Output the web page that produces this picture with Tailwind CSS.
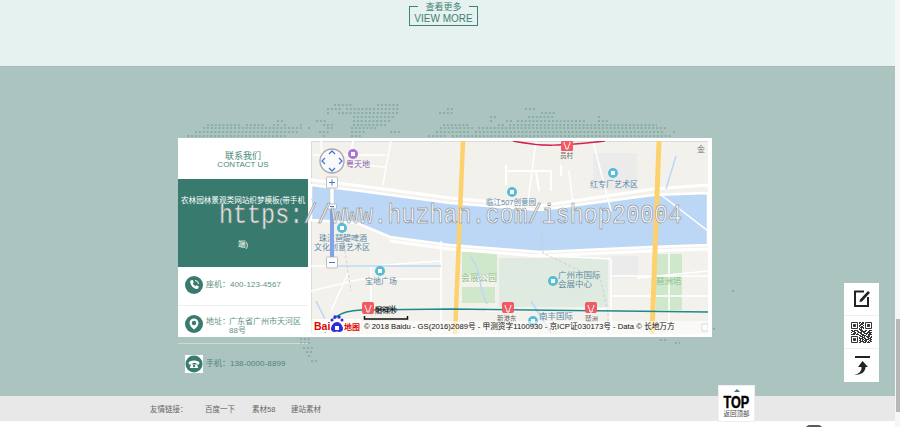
<!doctype html>
<html>

<head>
    <meta charset="UTF-8">
    <meta name="viewport" content="width=device-width, initial-scale=1.0">
    <title>联系我们</title>
    <script src="https://cdn.jsdelivr.net/npm/@tailwindcss/browser@4"></script>
</head>

<body class="bg-white overflow-hidden font-['Liberation_Sans','Noto_Sans_CJK_SC',sans-serif]">
    <div class="relative flex w-[900px] h-[427px] overflow-hidden">
        <div class="w-[895px] flex flex-col">
            <!-- more button -->
            <section class="h-[66px] bg-[#e6f2ef] pt-[6px] pl-[409px]">
                <a class="relative w-[69px] h-[20px] border border-t-0 border-[#3f8174] flex flex-col items-center text-[#3f8174]">
                    <span class="absolute top-0 left-0 w-[8px] border-t border-[#3f8174]"></span>
                    <span class="absolute top-0 right-0 w-[8px] border-t border-[#3f8174]"></span>
                    <span class="text-[9px] leading-[10px] mt-[-4px]">查看更多</span>
                    <span class="text-[10px] leading-[11px] mt-[1px] whitespace-nowrap">VIEW MORE</span>
                </a>
            </section>

            <!-- contact -->
            <section class="relative h-[330px] bg-[#abc4bf] border-t border-[#a2bcb7] pt-[71px] pl-[178px]">
                <svg class="absolute left-0 top-0" width="895" height="330" viewBox="0 66 895 330" fill="none" stroke="#8aaea7" stroke-width="2" stroke-dasharray="2 1.87">
                    <path d="M334 104H353M377 104H400M327 108H342M346 108H400M447 108H454M525 108H536M327 112H330M338 112H400M439 112H454M541 112H555" />
                    <path d="M353 116H396M490 116H497M528 116H555M598 116H602M277 120H283M316 120H326M353 120H392M490 120H493M506 120H512M517 120H586M598 120H609" />
                    <path d="M207 124H241M246 124H264M273 124H280M284 124H287M300 124H303M323 124H334M353 124H388M443 124H470M498 124H505M509 124H657" />
                    <path d="M203 127H303M308 127H310M327 127H334M351 127H377M440 127H473M478 127H667" />
                    <path d="M195 131H298M319 131H330M351 131H365M390 131H400M436 131H470M475 131H663M673 131H675" />
                    <path d="M187 135H287M323 135H326M351 135H362M428 135H447M452 135H473M475 135H672" />
                    <path d="M300 338H310M300 342H310M303 347H314M306 351H314M308 355H312M311 360H318M732 290H734M713 328H715M660 339H668M675 342H680" />
                </svg>

                <div class="relative flex w-[534px] h-[199px] bg-white">
                    <!-- left column -->
                    <div class="w-[130px] shrink-0">
                        <div class="h-[41px] pt-[14px] text-center text-[#4a8a7c]">
                            <p class="text-[9px] leading-[9px]">联系我们</p>
                            <p class="text-[8px] leading-[7px]">CONTACT US</p>
                        </div>
                        <div class="h-[88px] bg-[#387b6e] text-white text-center text-[7.6px] leading-[44px] overflow-hidden">
                            <p class="px-[1px]">农林园林景观类网站织梦模板(带手机端)</p>
                        </div>
                        <div class="h-[39px] flex items-center pl-[7px] pb-[2px] border-b border-[#eeeeee] text-[8px] text-[#5d9186]">
                            <svg class="w-[18px] h-[18px] shrink-0" viewBox="0 0 18 18">
                                <circle cx="9" cy="9" r="9" fill="#387b6e" />
                                <path d="M6.200 4.200 7.800 4l1 2.600-1 1c.5 1.200 1.300 2 2.500 2.600l1-1 2.400 1.100-.3 1.700c-.3.8-1 1-1.800.9C8.300 12.300 5.800 9.700 5.200 6.200c-.1-1 .2-1.700 1-2Z" fill="#fff" />
                                <path d="M10 4.500a3.500 3.500 0 0 1 3.500 3.500" stroke="#fff" fill="none" />
                            </svg>
                            <span class="ml-[3px] whitespace-nowrap">座机：</span><span class="whitespace-nowrap tracking-[.1px]">400-123-4567</span>
                        </div>
                        <div class="h-[38px] flex items-center pl-[7px] border-b border-white/40 text-[8px] leading-[9px] text-[#5d9186]">
                            <svg class="w-[18px] h-[18px] shrink-0 mt-[-1px]" viewBox="0 0 18 18">
                                <circle cx="9" cy="9" r="9" fill="#387b6e" />
                                <path d="M9 3.500a4.500 4.500 0 0 1 4.500 4.500c0 2.500-2.500 5-4.500 6.500-2-1.500-4.500-4-4.500-6.500A4.500 4.500 0 0 1 9 3.500Z" fill="#fff" />
                                <circle cx="9" cy="8" r="2.200" fill="#387b6e" />
                            </svg>
                            <span class="ml-[3px] w-[23px] shrink-0 self-start mt-[11px] whitespace-nowrap">地址：</span>
                            <span class="w-[72px] self-start mt-[11px]">广东省广州市天河区88号</span>
                        </div>
                        <div class="h-[38px] flex items-center pl-[7px] pt-[2px] text-[8px] text-[#4f857a]">
                            <svg class="w-[18px] h-[18px] shrink-0" viewBox="0 0 18 18">
                                <rect width="18" height="18" fill="#fff" />
                                <circle cx="9" cy="9" r="8.500" fill="#387b6e" />
                                <path d="M3.500 7.500C5 4.800 13 4.800 14.500 7.500l-.5 2h-2.500l-.3-1.500h-3.400l-.3 1.500H4Z" fill="#fff" />
                                <path d="M6 9.500h6l1.200 3.500H4.800Z" fill="#fff" />
                                <circle cx="9" cy="11" r="1.200" fill="#387b6e" />
                            </svg>
                            <span class="ml-[3px] whitespace-nowrap">手机：</span><span class="whitespace-nowrap tracking-[.1px]">138-0000-8899</span>
                        </div>
                    </div>

                    <!-- map -->
                    <svg class="ml-[3px] mt-[3px] shrink-0" width="397" height="193" viewBox="0 0 397 193" font-size="8.500">
                        <rect width="397" height="193" fill="#f3f1ec" />
                        <rect x="282" y="12" width="44" height="37" fill="#ebebeb" />
                        <rect x="0" y="0" width="1" height="193" fill="#d9dedc" />
                        <rect x="0" y="0" width="397" height="1" fill="#d9dedc" />
                        <!-- parks -->
                        <rect x="151" y="111" width="35" height="23" fill="#cfe8cb" />
                        <rect x="151" y="146" width="33" height="16" fill="#cfe8cb" />
                        <rect x="188" y="117" width="109" height="49" fill="#dfebe0" />
                        <path d="M345 113H371V169H345Z" fill="#cfe8cb" />
                        <rect x="300" y="115" width="27" height="22" fill="#ebebeb" />
                        <!-- river -->
                        <path d="M0 44 50 50 139 62 229 69 289 61 342 54 397 52V104L339 106 229 111 139 104 79 96 46 82 0 79Z" fill="#bbd7f5" stroke="#fff" stroke-width="2.500" />
                        <path d="M0 39 50 45 139 57 229 65 289 56 342 48 397 44M79 100 139 108 229 115 339 110 397 108" fill="none" stroke="#fff" stroke-width="3" />
                        <!-- small roads and water -->
                        <path d="M10 0 12 28M42 0 38 20M12 22 75 26 80 0M75 26 72 44M2 14H75M225 0 217 60M258 30 262 62M300 70 282 0M0 125H60L100 122 130 120M0 150 50 138H130M60 125V170M130 100V192M190 112 300 118M300 118V192M175 170 297 168M300 155 397 155M300 135 397 135M326 137 397 130M358 112V192M397 90 345 50M38 130 20 170" fill="none" stroke="#fff" stroke-width="1.500" />
                        <path d="M195 24V44M195 30H240V50M225 30 228 50M250 24V35" fill="none" stroke="#fff" stroke-width="2" />
                        <path d="M365 15 355 48M5 160 18 186M160 116C170 130 168 140 171 150M170 148 176 163M220 160 240 192M20 125H130" fill="none" stroke="#bbd7f5" stroke-width="1.500" />
                        <path d="M0 58 30 85 40 150M229 70 232 112 290 140 297 172V192" fill="none" stroke="#c9c9c9" stroke-width=".8" stroke-dasharray="3 2" />
                        <!-- highways -->
                        <path d="M152 0 144 193" stroke="#fdd26e" stroke-width="4.500" fill="none" />
                        <path d="M348 0 341 193" stroke="#fdd26e" stroke-width="5" fill="none" />
                        <!-- metro lines -->
                        <path d="M202 0C230 6 250 5 294 0" stroke="#d3224f" stroke-width="1.500" fill="none" />
                        <path d="M14 192C20 178 26 170 50 169L140 168 397 171" stroke="#1d8a8a" stroke-width="1.500" fill="none" />
                        <g fill="#ef5a64">
                            <rect x="51" y="161" width="12" height="12" rx="2" />
                            <rect x="191" y="161" width="12" height="11" rx="2" />
                            <rect x="274" y="161" width="12" height="11" rx="2" />
                            <rect x="250" y="0" width="12" height="10" rx="1" />
                        </g>
                        <path d="M54 164c0 3 2 3 2 7h2c0-4 2-4 2-7M194 164c0 3 2 3 2 7h2c0-4 2-4 2-7M277 164c0 3 2 3 2 7h2c0-4 2-4 2-7M253 1c0 3 2 3 2 7h2c0-4 2-4 2-7" fill="none" stroke="#fff" />
                        <!-- pois -->
                        <circle cx="42" cy="13" r="5" fill="#a974d6" />
                        <rect x="40" y="11" width="4" height="4" fill="#fff" />
                        <g fill="#56bcd8">
                            <circle cx="31" cy="87" r="5" />
                            <circle cx="69" cy="130" r="5" />
                            <circle cx="201" cy="51" r="5" />
                            <circle cx="302" cy="32" r="5" />
                            <circle cx="242" cy="140" r="5" />
                            <circle cx="222" cy="180" r="5" />
                        </g>
                        <g fill="#fff">
                            <rect x="29" y="85" width="4" height="4" />
                            <rect x="67" y="128" width="4" height="4" />
                            <rect x="199" y="49" width="4" height="4" />
                            <rect x="300" y="30" width="4" height="4" />
                            <rect x="240" y="138" width="4" height="4" />
                            <rect x="220" y="178" width="4" height="4" />
                        </g>
                        <!-- labels -->
                        <g fill="#5e8ba3">
                            <text x="35" y="26" fill="#8b63b0" font-size="8">粤天地</text>
                            <text x="8" y="100" font-size="8">珠江琶醍啤酒</text>
                            <text x="3" y="109" font-size="8">文化创意艺术区</text>
                            <text x="54" y="143" font-size="8">宝地广场</text>
                            <text x="175" y="64" font-size="7.500">临江507创意园</text>
                            <text x="279" y="46" font-size="8">红专厂艺术区</text>
                            <text x="247" y="137" font-size="8.500">广州市国际</text>
                            <text x="247" y="146" font-size="8.500">会展中心</text>
                            <text x="228" y="178" font-size="8.500">南丰国际</text>
                            <text x="150" y="140" font-size="9" fill="#92c492">会展公园</text>
                            <text x="345" y="143" font-size="8.500" fill="#92c492">琶洲塔</text>
                            <text x="249" y="17" font-size="6.500" fill="#666">员村</text>
                            <text x="186" y="180" font-size="6.500" fill="#666">新港东</text>
                            <text x="274" y="180" font-size="6.500" fill="#666">琶洲</text>
                            <text x="386" y="11" font-size="8" fill="#777">金</text>
                            <text x="64" y="172" font-size="7.500" fill="#333">磨碟沙</text>
                        </g>
                        <!-- footer strip -->
                        <rect x="0" y="180" width="397" height="13" fill="#fff" opacity=".55" />
                        <text x="64" y="171" font-size="8" fill="#111">500米</text>
                        <path d="M53.500 175V178H96.500V175" fill="none" stroke="#111" stroke-width="1.500" />
                        <text x="53" y="188" font-size="7.700" fill="#111">© 2018 Baidu - GS(2016)2089号 - 甲测资字1100930 - 京ICP证030173号 - Data © 长地万方</text>
                        <rect x="391" y="183" width="6" height="7" fill="#fff" stroke="#bbb" stroke-width=".5" />
                        <!-- baidu logo -->
                        <rect x="2" y="178" width="48" height="13" fill="#fff" opacity=".9" />
                        <text x="3" y="189" font-size="10.500" font-weight="700" fill="#e10601">Bai</text>
                        <g fill="#2a2fd8">
                            <circle cx="21" cy="179" r="1.500" />
                            <circle cx="24" cy="176" r="1.700" />
                            <circle cx="28" cy="176" r="1.700" />
                            <circle cx="31" cy="179" r="1.500" />
                            <path d="M20 188c0-3.500 3-7 6-7s6 3.500 6 7c0 2.500-3 3.500-6 2.500-3 1-6 0-6-2.500Z" />
                        </g>
                        <rect x="24" y="185" width="4" height="4" fill="#fff" />
                        <text x="33" y="189" font-size="8" font-weight="700" fill="#e10601">地图</text>
                        <!-- controls -->
                        <circle cx="21" cy="20" r="12" fill="#fafafa" stroke="#a8a8a8" stroke-width="1.300" />
                        <path d="M18 13 21 10 24 13M18 27 21 30 24 27M14 17 11 20 14 23M28 17 31 20 28 23" fill="none" stroke="#3f76e0" stroke-width="1.300" />
                        <rect x="19" y="47" width="4" height="22" fill="#fff" stroke="#c8c8c8" stroke-width=".5" />
                        <rect x="19" y="68" width="4" height="50" fill="#84a3e6" />
                        <g fill="#fcfcfc" stroke="#a9a9a9" stroke-width=".7">
                            <rect x="15.500" y="36" width="11" height="11" rx="1" />
                            <rect x="16.500" y="63" width="9" height="5" rx="1" />
                            <rect x="15.500" y="116" width="11" height="11" rx="1" />
                        </g>
                        <path d="M18 41.500H24M21 38.500V44.500M18 121.500H24M19 65.500H23" stroke="#3f76e0" fill="none" />
                    </svg>
                </div>
            </section>

            <!-- links -->
            <footer class="h-[25px] bg-[#e8e8e8] flex items-center pl-[150px] pt-[3px] text-[7.5px] text-[#666]">
                <a class="w-[55px]">友情链接：</a>
                <a class="w-[47px]">百度一下</a>
                <a class="w-[39px]">素材58</a>
                <a>建站素材</a>
            </footer>
        </div>

        <!-- scrollbar -->
        <div class="w-[5px] bg-[#f6f6f6] pt-[319px]">
            <div class="w-[4px] ml-[1px] h-[93px] bg-[#b8b8b8]"></div>
        </div>

        <!-- watermark -->
        <div class="absolute left-[219px] top-[199px] w-[535px] origin-left scale-x-[.866] whitespace-nowrap font-['Liberation_Mono',monospace] text-[27px] leading-[34px] text-white/85 [-webkit-text-stroke:0.6px_#808080]">https://www.huzhan.com/ishop20004</div>

        <!-- side tools -->
        <div class="absolute left-[844px] top-[283px] w-[35px] h-[99px] bg-white flex flex-col items-center divide-y divide-[#efefef]">
            <div class="h-[33px] w-full flex items-center justify-center">
                <svg class="w-[18px] h-[18px]" viewBox="0 0 18 18" fill="none">
                    <path d="M11 1.500H2V16H15V7" stroke="#222" stroke-width="2" />
                    <path d="M6.500 12 7 9.500 15 1 17 2.800 9 11.500Z" fill="#222" />
                </svg>
            </div>
            <div class="h-[33px] w-full flex items-center justify-center">
                <svg class="w-[21px] h-[21px]" viewBox="0 0 21 21" fill="none" stroke="#333">
                    <path d="M8 .5h2M11 .5h2M8 1.500h1M10 1.500h3M9 2.500h3M8 3.500h2M12 3.500h1M8 4.500h1M10 4.500h2M9 5.500h4M8 6.500h1M10 6.500h1M12 6.500h1" />
                    <path d="M8 7.500h3M0 8.500h2M3 8.500h4M9 8.500h3M14 8.500h2M18 8.500h3M1 9.500h3M6 9.500h2M10 9.500h5M17 9.500h2M0 10.500h1M3 10.500h2M7 10.500h4M12 10.500h2M16 10.500h5M2 11.500h3M6 11.500h1M9 11.500h2M13 11.500h4M18 11.500h2M0 12.500h4M5 12.500h3M10 12.500h3M15 12.500h1M17 12.500h4" />
                    <path d="M8 13.500h2M11 13.500h4M17 13.500h2M9 14.500h3M13 14.500h1M15 14.500h4M20 14.500h1M8 15.500h1M11 15.500h3M16 15.500h2M19 15.500h2M8 16.500h4M13 16.500h2M17 16.500h3M9 17.500h1M11 17.500h2M14 17.500h4M19 17.500h2M8 18.500h2M11 18.500h1M13 18.500h3M18 18.500h2M9 19.500h4M14 19.500h2M17 19.500h1M19 19.500h2M8 20.500h2M12 20.500h3M16 20.500h3" />
                    <path d="M.5.5H6.500V6.500H.5ZM14.500.5H20.500V6.500H14.500ZM.5 14.500H6.500V20.500H.5Z" />
                    <path d="M2.500 2.500H4.500V4.500H2.500ZM16.500 2.500H18.500V4.500H16.500ZM2.500 16.500H4.500V18.500H2.500Z" fill="#333" />
                </svg>
            </div>
            <div class="h-[33px] w-full flex items-center justify-center">
                <svg class="w-[20px] h-[22px]" viewBox="0 0 20 22" fill="#222">
                    <rect x="3" y="1" width="15" height="2" />
                    <path d="M10.500 6 16 12H13.500C13.500 17 9 20 2 20 7 19 10 16 9.500 12H6Z" />
                </svg>
            </div>
        </div>

        <!-- back to top -->
        <div class="absolute left-[718px] top-[385px] w-[37px] h-[37px] bg-white border border-[#eeeeee] flex flex-col items-center">
            <span class="mt-[3px] w-0 h-0 border-x-[3px] border-x-transparent border-b-[3px] border-b-[#387b6e]"></span>
            <span class="text-[14px] leading-[14px] mt-[3px] font-bold text-black scale-x-[.9] scale-y-[1.15] [-webkit-text-stroke:0.4px_#000]">TOP</span>
            <span class="text-[6.5px] leading-[8px] mt-[1px] text-[#444] whitespace-nowrap">返回顶部</span>
        </div>

        <!-- cut off at the bottom -->
        <div class="absolute left-[805px] top-[425px] w-[18px] h-[10px] rounded-full bg-[#555a66]"></div>
    </div>
</body>

</html>
